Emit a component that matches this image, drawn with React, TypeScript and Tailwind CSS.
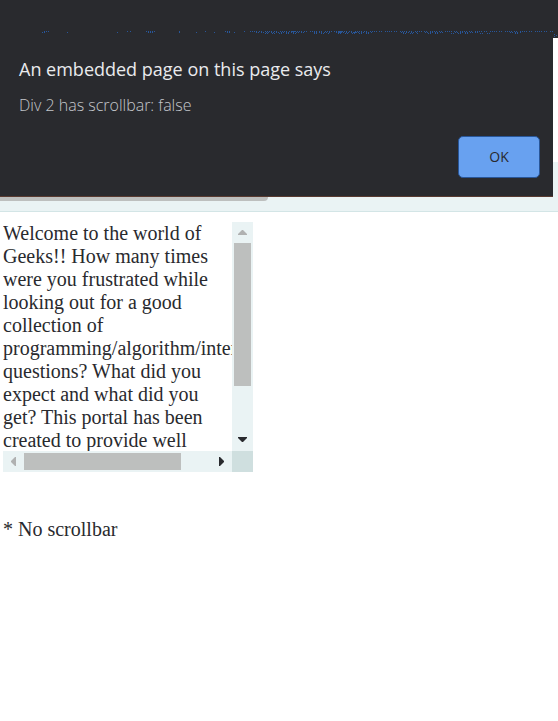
import React from "react";

const lines = [
  "Welcome to the world of",
  "Geeks!! How many times",
  "were you frustrated while",
  "looking out for a good",
  "collection of",
  "programming/algorithm/interview",
  "questions? What did you",
  "expect and what did you",
  "get? This portal has been",
  "created to provide well",
];

const arrowPoints = {
  up: "0,4 4,0 5,0 9,4 9,5 0,5",
  down: "0,0 9,0 9,1 5,5 4,5 0,1",
  left: "5,0 5,9 4,9 0,5 0,4 4,0",
  right: "0,0 1,0 5,4 5,5 1,9 0,9",
};

function Arrow({ direction, className }: { direction: keyof typeof arrowPoints; className: string }) {
  const vertical = direction === "up" || direction === "down";
  return (
    <svg
      width={vertical ? 9 : 5}
      height={vertical ? 5 : 9}
      viewBox={vertical ? "0 0 9 5" : "0 0 5 9"}
      aria-hidden="true"
      className={className}
    >
      <polygon points={arrowPoints[direction]} />
    </svg>
  );
}

function TopBar() {
  return (
    <header className="h-[38px] bg-[#292a2e] pt-[31px]">
      <svg
        width="100%"
        height="6"
        viewBox="0 0 558 6"
        preserveAspectRatio="none"
        shapeRendering="crispEdges"
        aria-hidden="true"
        stroke="#285699"
      >
        <path d="M44 .5h5M67 1.5h1M117 1.5h1M127 .5h1M130 .5h1M146 .5h9M179 .5h2M205 .5h2M214 1.5h1M225 .5h5M244 .5h1" strokeDasharray="1 1" />
        <path d="M42 1.5h1M44 1.5h2M148 1.5h6M179 1.5h1M196 1.5h1M227 1.5h3M234 1.5h1" strokeDasharray="1 1" />
        <path d="M250 .5h303" strokeDasharray="1 1 1 1 1 1 1 2 1 1 1 3" />
        <path d="M256 1.5h48M314 1.5h16M336 1.5h36M401 1.5h16M425 1.5h18M455 1.5h25M510 1.5h12" strokeDasharray="1 1 1 2" />
        <path d="M265 2.5h33M314 2.5h15M338 2.5h33M403 2.5h15M428 2.5h11M451 2.5h20M480 2.5h10M515 2.5h6" strokeDasharray="1 1 1 4" />
        <path d="M292 .5h4M338 .5h4M338 1.5h4M354 1.5h3M554 3.5h1M556 4.5h1M554 5.5h1" />
      </svg>
    </header>
  );
}

function AlertDialog() {
  return (
    <section
      role="alertdialog"
      aria-labelledby="alert-title"
      aria-describedby="alert-message"
      className="flex h-[159px] flex-1 flex-col border-b border-[#593a30] bg-[#292a2e] pl-[19px] pr-[13px] pt-[18px] font-['Open_Sans','Noto_Sans',sans-serif]"
    >
      <h1 id="alert-title" className="text-[18px] leading-[26px] text-[#e9eaed]">
        An embedded page on this page says
      </h1>
      <p id="alert-message" className="mt-3 text-[16px] leading-[22px] font-light text-[#c4c7cb]">
        Div 2 has scrollbar: false
      </p>
      <button
        type="button"
        className="mt-5 h-[42px] w-[82px] self-end rounded-[5px] border border-[#285699] bg-[#68a1f0] text-[14px] leading-[20px] text-[#292a2e]"
      >
        OK
      </button>
    </section>
  );
}

function ScrollBox() {
  return (
    <div className="grid w-[250px] grid-cols-[229px_21px] grid-rows-[229px_21px]">
      <div className="overflow-hidden whitespace-nowrap">
        {lines.map((line) => (
          <p key={line}>{line}</p>
        ))}
      </div>
      <div className="flex flex-col items-center justify-between bg-[#eaf3f4]">
        <div className="flex flex-col items-center">
          <div className="flex h-[21px] items-center">
            <Arrow direction="up" className="fill-[#b0b1b1]" />
          </div>
          <div className="h-[143px] w-[17px] bg-[#bdbfbe]" />
        </div>
        <div className="flex h-[23px] items-center">
          <Arrow direction="down" className="fill-[#292a2e]" />
        </div>
      </div>
      <div className="flex items-center justify-between bg-[#eaf3f4]">
        <div className="flex items-center">
          <div className="flex w-[21px] justify-center">
            <Arrow direction="left" className="fill-[#b0b1b1]" />
          </div>
          <div className="h-[17px] w-[157px] bg-[#bdbfbe]" />
        </div>
        <div className="flex w-[21px] justify-center">
          <Arrow direction="right" className="fill-[#292a2e]" />
        </div>
      </div>
      <div className="bg-[#cfdfdf]" />
    </div>
  );
}

export default function App() {
  return (
    <div className="min-h-screen bg-white">
      <TopBar />
      <div className="flex">
        <AlertDialog />
        <div className="w-[5px] pt-[124px]">
          <div className="h-full bg-[#eaf3f4]" />
        </div>
      </div>
      <div className="h-[15px] border-b border-[#d3e5e6] bg-[#eaf3f4]">
        <div className="h-1 w-[268px] rounded-br-[4px] bg-[#bdbfbe]" />
      </div>
      <main className="px-[3px] pt-[10px] font-['Liberation_Serif',serif] text-[20px] leading-[23px] text-[#292a2e]">
        <ScrollBox />
        <p className="mt-[46px]">* No scrollbar</p>
      </main>
    </div>
  );
}
